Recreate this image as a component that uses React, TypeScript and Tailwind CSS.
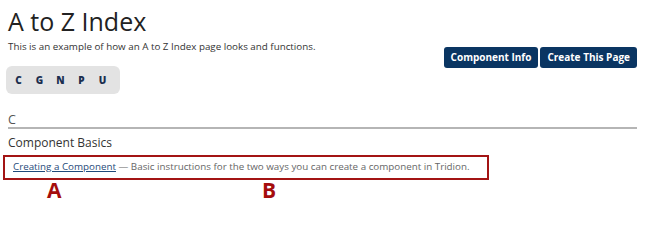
const letters = ['C', 'G', 'N', 'P', 'U']

export default function App() {
  return (
    <div className="w-[650px] h-[200px] overflow-hidden bg-white pl-2 pr-[13px] font-['Open_Sans',sans-serif] text-[#333]">
      <h1 className="pt-[3px] text-[25px] leading-[36px] font-normal text-[#222]">A to Z Index</h1>
      <div className="flex items-start justify-between">
        <div>
          <p className="mt-[1px] text-[9.8px] leading-[14px] text-[#333]">
            This is an example of how an A to Z Index page looks and functions.
          </p>
          <div className="-ml-[2px] mt-[12px] flex h-[28px] w-[114px] items-center gap-[12px] rounded-[6px] bg-[#e3e3e3] pl-[8px] text-[10px] font-extrabold text-[#1b2e4f]">
            {letters.map((l) => (
              <span key={l} className="w-[9px] text-center">{l}</span>
            ))}
          </div>
        </div>
        <div className="mt-[8px] flex gap-[2px]">
          <button className="h-[21px] rounded-[3px] bg-[#0a3562] px-[7px] text-[10px] font-bold text-white">
            Component Info
          </button>
          <button className="h-[21px] rounded-[3px] bg-[#0a3562] px-[7px] text-[10px] font-bold text-white">
            Create This Page
          </button>
        </div>
      </div>
      <h2 className="mt-[18px] border-b-2 border-[#b5b5b5] text-[12.5px] leading-[15px] text-[#555]">C</h2>
      <h3 className="mt-[5px] text-[12px] leading-[18px] text-[#333]">Component Basics</h3>
      <div className="-ml-[5px] mt-[3px] flex h-[25px] w-[486px] items-center whitespace-nowrap border-2 border-[#a31414] pl-[8px] text-[9.8px] text-[#666]">
        <a href="#" className="text-[#1f4a7a] underline">Creating a Component</a>
        <span>&nbsp;— Basic instructions for the two ways you can create a component in Tridion.</span>
      </div>
      <div className="flex pl-[39px] text-[21px] font-bold leading-[20px] text-[#a50d0d]">
        <span className="w-[215px]">A</span>
        <span>B</span>
      </div>
    </div>
  )
}
